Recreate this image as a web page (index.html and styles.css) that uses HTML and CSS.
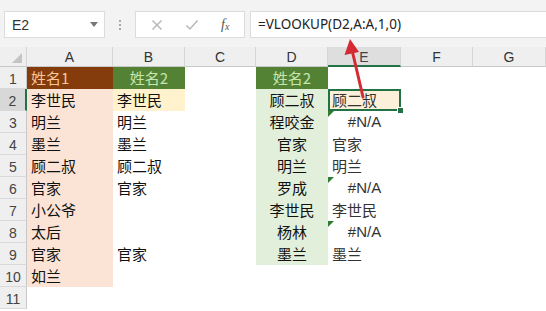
FILE: index.html
```html
<!DOCTYPE html>
<html lang="zh">
<head>
<meta charset="utf-8">
<title>VLOOKUP</title>
<link rel="stylesheet" href="styles.css">
</head>
<body>
<div class="app">
  <div class="toolbar">
    <div class="namebox"><span>E2</span><span class="caret"></span></div>
    <div class="dots"><i></i><i></i><i></i></div>
    <div class="fxbtns">
      <svg class="ic" width="12" height="12" viewBox="0 0 12 12"><path d="M1.5 1.5L10.5 10.5M10.5 1.5L1.5 10.5" stroke="#b8b8b8" stroke-width="1.5" fill="none"/></svg>
      <svg class="ic" width="14" height="12" viewBox="0 0 14 12"><path d="M1.5 6.5L5 10L12.5 1.5" stroke="#b8b8b8" stroke-width="1.5" fill="none"/></svg>
      <span class="fx">f<sub>x</sub></span>
    </div>
    <div class="formula">=VLOOKUP(D2,A:A,1,0)</div>
  </div>
  <div class="sheet">
    <div class="corner"><span class="tri"></span></div>
    <div class="ch">A</div><div class="ch">B</div><div class="ch">C</div><div class="ch">D</div><div class="ch sel">E</div><div class="ch">F</div><div class="ch">G</div>

    <div class="rh">1</div>
    <div class="c h1">姓名1</div><div class="c h2">姓名2</div><div class="c"></div><div class="c h2">姓名2</div><div class="c"></div><div class="c"></div><div class="c"></div>

    <div class="rh sel">2</div>
    <div class="c a">李世民</div><div class="c b y">李世民</div><div class="c"></div><div class="c d">顾二叔</div><div class="c e cur">顾二叔<span class="handle"></span></div><div class="c"></div><div class="c"></div>

    <div class="rh">3</div>
    <div class="c a">明兰</div><div class="c b">明兰</div><div class="c"></div><div class="c d">程咬金</div><div class="c e na err">#N/A</div><div class="c"></div><div class="c"></div>

    <div class="rh">4</div>
    <div class="c a">墨兰</div><div class="c b">墨兰</div><div class="c"></div><div class="c d">官家</div><div class="c e">官家</div><div class="c"></div><div class="c"></div>

    <div class="rh">5</div>
    <div class="c a">顾二叔</div><div class="c b">顾二叔</div><div class="c"></div><div class="c d">明兰</div><div class="c e">明兰</div><div class="c"></div><div class="c"></div>

    <div class="rh">6</div>
    <div class="c a">官家</div><div class="c b">官家</div><div class="c"></div><div class="c d">罗成</div><div class="c e na err">#N/A</div><div class="c"></div><div class="c"></div>

    <div class="rh">7</div>
    <div class="c a">小公爷</div><div class="c b"></div><div class="c"></div><div class="c d">李世民</div><div class="c e">李世民</div><div class="c"></div><div class="c"></div>

    <div class="rh">8</div>
    <div class="c a">太后</div><div class="c b"></div><div class="c"></div><div class="c d">杨林</div><div class="c e na err">#N/A</div><div class="c"></div><div class="c"></div>

    <div class="rh">9</div>
    <div class="c a">官家</div><div class="c b">官家</div><div class="c"></div><div class="c d">墨兰</div><div class="c e">墨兰</div><div class="c"></div><div class="c"></div>

    <div class="rh">10</div>
    <div class="c a">如兰</div><div class="c b"></div><div class="c"></div><div class="c"></div><div class="c"></div><div class="c"></div><div class="c"></div>

    <div class="rh">11</div>
    <div class="c"></div><div class="c"></div><div class="c"></div><div class="c"></div><div class="c"></div><div class="c"></div><div class="c"></div>
  </div>
  <svg class="arrow" width="546" height="311" viewBox="0 0 546 311">
    <line x1="363" y1="97" x2="352.5" y2="52" stroke="#d42a33" stroke-width="3" stroke-linecap="round"/>
    <polygon points="350,39 344.5,55 359,52" fill="#d42a33"/>
  </svg>
</div>
</body>
</html>
```
FILE: styles.css
```css
html, body {
  margin: 0;
  padding: 0;
  background: #ffffff;
}
body {
  width: 546px;
  height: 311px;
  overflow: hidden;
  font-family: "Noto Sans CJK SC", "Noto Sans", sans-serif;
}
.app {
  position: relative;
  width: 546px;
  height: 311px;
}
.toolbar {
  height: 47px;
  box-sizing: border-box;
  background: #f3f3f3;
  padding-top: 11px;
  display: flex;
  align-items: flex-start;
}
.namebox {
  margin-left: 4px;
  width: 101px;
  height: 27px;
  box-sizing: border-box;
  background: #fff;
  border: 1px solid #dcdcdc;
  display: flex;
  align-items: center;
  justify-content: space-between;
  padding: 0 6px 0 7px;
  font-family: "Liberation Sans", sans-serif;
  font-size: 14px;
  color: #333;
}
.caret {
  width: 0;
  height: 0;
  border-left: 4px solid transparent;
  border-right: 4px solid transparent;
  border-top: 5px solid #777;
}
.dots {
  width: 30px;
  height: 27px;
  display: flex;
  flex-direction: column;
  align-items: center;
  justify-content: center;
  gap: 2px;
}
.dots i {
  display: block;
  width: 2px;
  height: 2px;
  background: #a8a8a8;
}
.fxbtns {
  width: 110px;
  height: 27px;
  box-sizing: border-box;
  background: #fff;
  border: 1px solid #dcdcdc;
  display: flex;
  align-items: center;
  padding-left: 15px;
  gap: 0;
}
.fxbtns .ic:first-child { margin-right: 22px; }
.fxbtns .ic:nth-child(2) { margin-right: 22px; }
.fx {
  font-family: "Liberation Serif", serif;
  font-style: italic;
  font-size: 14px;
  color: #555;
  line-height: 1;
}
.fx sub {
  font-size: 10px;
  vertical-align: -1px;
}
.formula {
  margin-left: 5px;
  flex: 1;
  height: 27px;
  box-sizing: border-box;
  background: #fff;
  border: 1px solid #dcdcdc;
  border-right: none;
  padding-left: 7px;
  font-family: "Noto Sans", sans-serif;
  font-size: 13.5px;
  line-height: 25px;
  color: #222;
}
.sheet {
  display: grid;
  grid-template-columns: 27px 86px 72px 71px 72px 73px 72px 73px;
  grid-template-rows: 20px repeat(11, 22px);
}
.corner {
  position: relative;
  background: #efefef;
  border-right: 1px solid #d6d6d6;
  border-bottom: 1px solid #c8c8c8;
  box-sizing: border-box;
}
.tri {
  position: absolute;
  right: 4px;
  bottom: 3px;
  width: 0;
  height: 0;
  border-left: 10px solid transparent;
  border-bottom: 10px solid #c4c4c4;
}
.ch {
  background: #efefef;
  border-right: 1px solid #d6d6d6;
  border-bottom: 1px solid #c8c8c8;
  box-sizing: border-box;
  text-align: center;
  font-family: "Liberation Sans", sans-serif;
  font-size: 14px;
  line-height: 20px;
  color: #333;
}
.ch.sel {
  background: #dedede;
  border-bottom: 2px solid #217346;
  color: #444;
}
.rh {
  background: #efefef;
  border-right: 1px solid #c8c8c8;
  border-bottom: 1px solid #d9d9d9;
  box-sizing: border-box;
  text-align: center;
  font-family: "Liberation Sans", sans-serif;
  font-size: 14px;
  line-height: 24px;
  color: #444;
}
.rh.sel {
  background: #d8d8d8;
  border-right: 2px solid #217346;
  color: #444;
}
.c {
  position: relative;
  box-sizing: border-box;
  padding-left: 4px;
  font-size: 15px;
  line-height: 22px;
  color: #111;
  white-space: nowrap;
}
.h1 {
  background: #843c0c;
  color: #f8c69c;
}
.h2 {
  background: #548235;
  color: #c6e5b0;
  text-align: center;
  padding-left: 0;
}
.a { background: #fbe4d5; }
.y { background: #fff2cc; }
.d {
  background: #e2efda;
  text-align: center;
  padding-left: 0;
}
.e { color: #333; }
.na {
  text-align: center;
  padding-left: 0;
  font-family: "Liberation Sans", sans-serif;
  font-size: 15px;
}
.err::before {
  content: "";
  position: absolute;
  left: 0;
  top: 0;
  width: 0;
  height: 0;
  border-top: 6px solid #2f7d32;
  border-right: 6px solid transparent;
}
.cur {
  background: #fdf0da;
  box-shadow: inset 0 0 0 2px #217346;
}
.handle {
  position: absolute;
  right: -3px;
  bottom: -3px;
  width: 5px;
  height: 5px;
  background: #217346;
  border: 1px solid #fff;
}
.arrow {
  position: absolute;
  left: 0;
  top: 0;
  pointer-events: none;
}
```
